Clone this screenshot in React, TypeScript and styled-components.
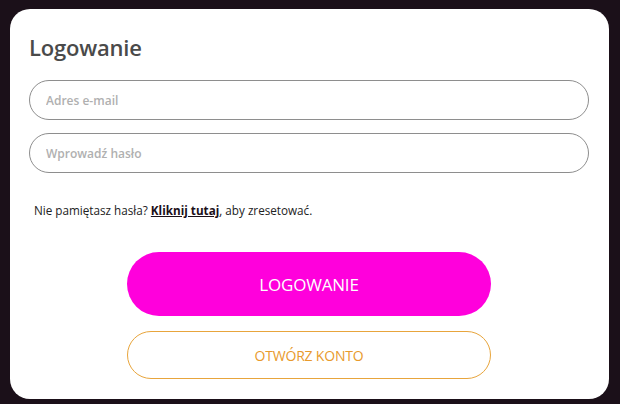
import React from 'react';
import styled, {createGlobalStyle} from 'styled-components';

const Global = createGlobalStyle`
    html, body {
        margin: 0;
        padding: 0;
        background: #1b1019;
        font-family: "Open Sans", "Liberation Sans", sans-serif;
    }
`;

const Page = styled.div`
    width: 620px;
    height: 404px;
    padding: 9px 11px 5px 10px;
    box-sizing: border-box;
    background: #1b1019;
`;

const Card = styled.div`
    background: #fff;
    border-radius: 20px;
    height: 390px;
    box-sizing: border-box;
    padding: 23px 20px 0 19px;
    display: flex;
    flex-direction: column;
`;

const Title = styled.h1`
    margin: 0 0 18px;
    font-size: 22px;
    line-height: 30px;
    font-weight: 600;
    color: #4a4a4a;
    letter-spacing: -0.2px;
`;

const Field = styled.input`
    height: 40px;
    box-sizing: border-box;
    border: 1px solid #8e8e8e;
    border-radius: 20px;
    padding: 0 16px;
    font-family: inherit;
    font-size: 12px;
    font-weight: 600;
    color: #333;
    outline: none;
    margin-bottom: ${(p: {$gap?: number}) => p.$gap ?? 0}px;
    &::placeholder {
        color: #b0b0b0;
    }
`;

const Hint = styled.p`
    margin: 29px 0 0 5px;
    font-size: 11.7px;
    line-height: 16px;
    color: #222;
    a {
        color: #1b1019;
        font-weight: 700;
        text-decoration: underline;
    }
`;

const Actions = styled.div`
    display: flex;
    flex-direction: column;
    align-items: center;
    gap: 15px;
    margin-top: 34px;
`;

const Btn = styled.button<{$outline?: boolean}>`
    width: 364px;
    height: ${p => (p.$outline ? 48 : 64)}px;
    border-radius: 32px;
    font-family: inherit;
    font-size: ${p => (p.$outline ? 14 : 17)}px;
    font-weight: 500;
    text-transform: uppercase;
    cursor: pointer;
    background: ${p => (p.$outline ? '#fff' : '#ff00dc')};
    color: ${p => (p.$outline ? '#e89a2c' : '#fff')};
    border: ${p => (p.$outline ? '1px solid #e8a53c' : 'none')};
    letter-spacing: -0.2px;
`;

const App = () => {
    return (
        <>
            <Global />
            <Page>
                <Card>
                    <Title>Logowanie</Title>
                    <Field $gap={13} placeholder='Adres e-mail' />
                    <Field type='password' placeholder='Wprowadź hasło' />
                    <Hint>
                        Nie pamiętasz hasła? <a href='#'>Kliknij tutaj</a>, aby zresetować.
                    </Hint>
                    <Actions>
                        <Btn>Logowanie</Btn>
                        <Btn $outline>Otwórz konto</Btn>
                    </Actions>
                </Card>
            </Page>
        </>
    );
};

export default App;
